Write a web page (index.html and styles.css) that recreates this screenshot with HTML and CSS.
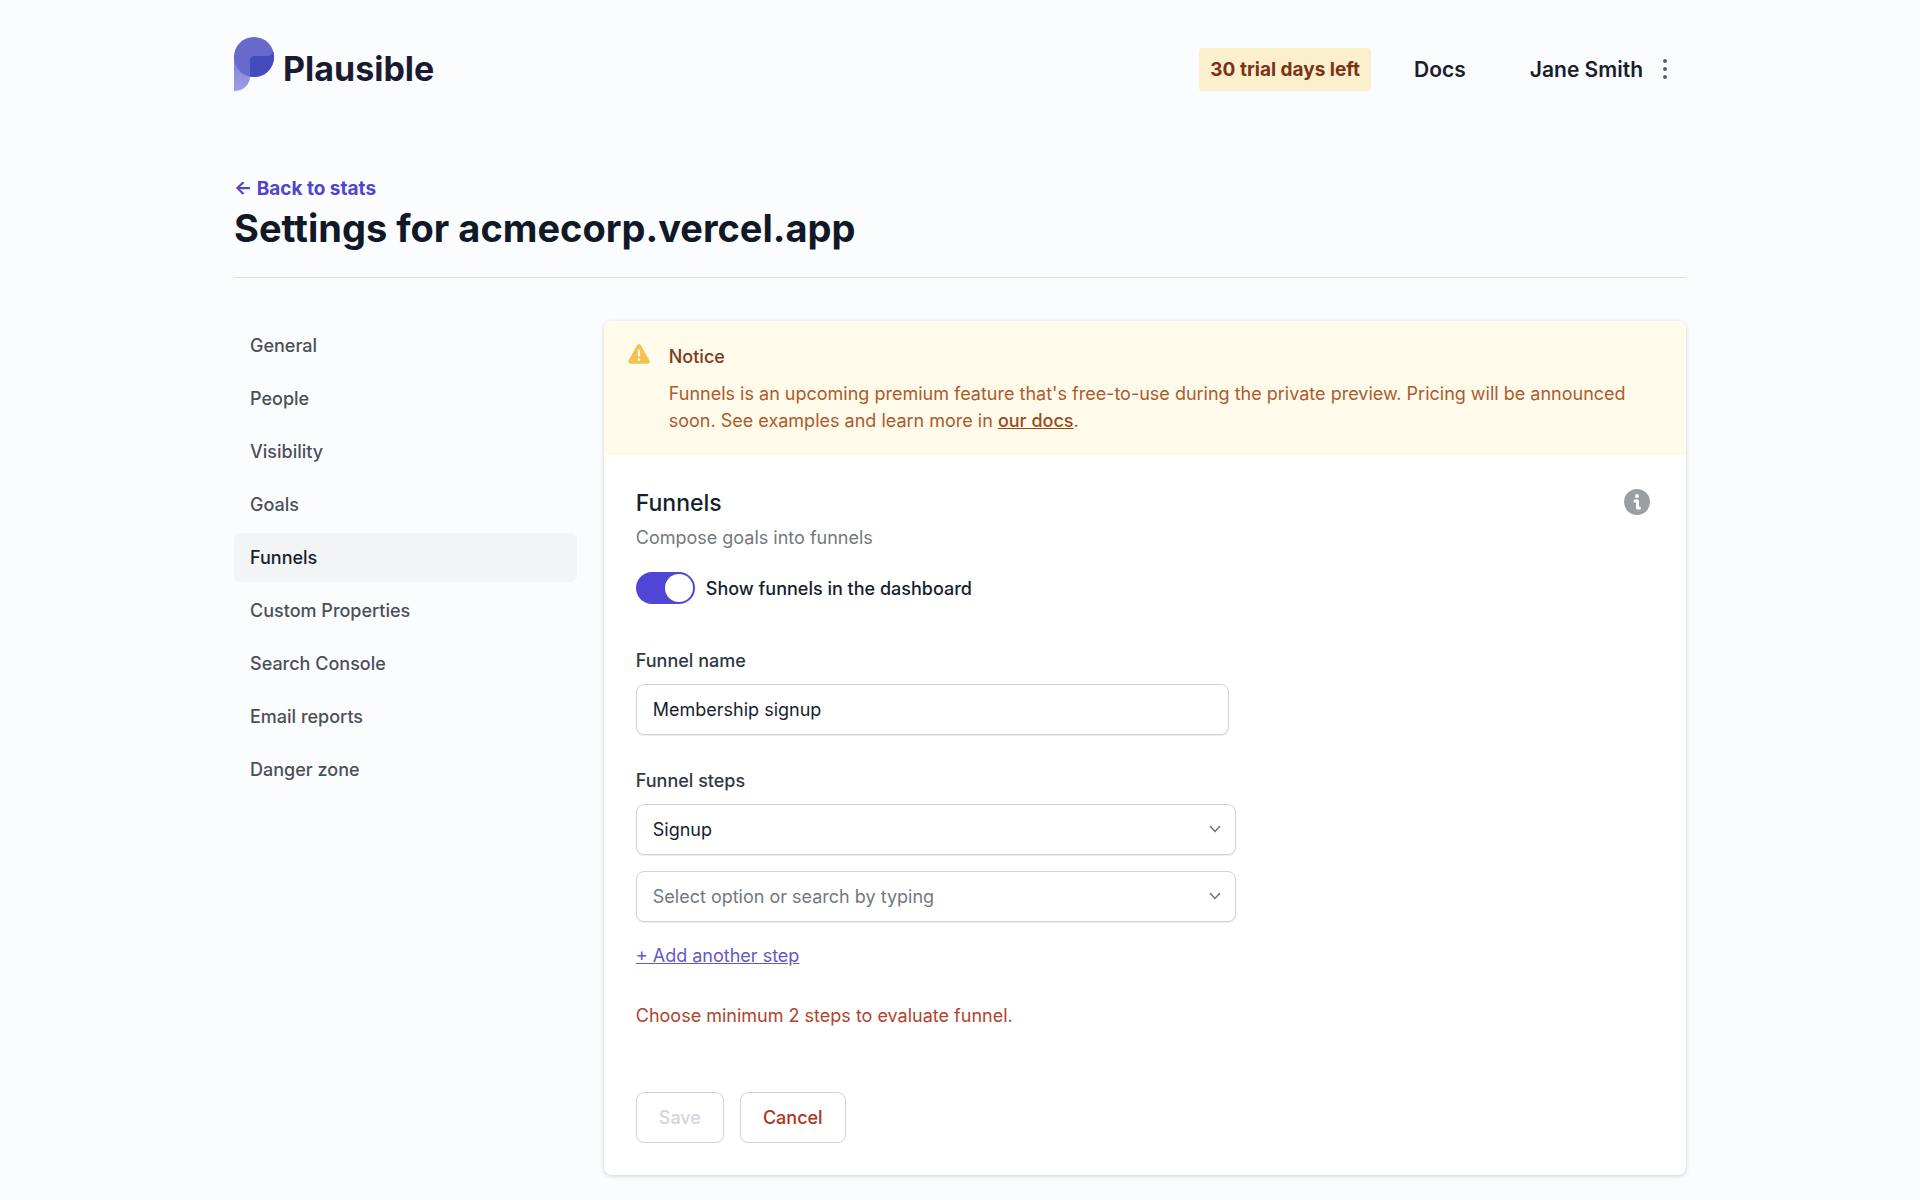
FILE: index.html
```html
<!DOCTYPE html>
<html lang="en">
<head>
    <meta charset="UTF-8">
    <meta name="viewport" content="width=device-width, initial-scale=1.0">
    <title>Plausible - Funnel settings</title>
    <link rel="stylesheet" href="styles.css">
</head>
<body>
    <header class="container header">
        <a href="#" class="logo">
            <svg class="logo-mark" viewBox="0 0 40 54" aria-hidden="true">
                <defs>
                    <linearGradient id="tail" x1="0" y1="0" x2="0" y2="1">
                        <stop offset="0" stop-color="#7f7fd4"/>
                        <stop offset="1" stop-color="#a09be4"/>
                    </linearGradient>
                    <clipPath id="disc"><circle cx="20" cy="20" r="20"/></clipPath>
                </defs>
                <path d="M0 18V54C9 54 16 48 16 39V18Z" fill="url(#tail)"/>
                <circle cx="20" cy="20" r="20" fill="#676acb"/>
                <path d="M16 54V24Q16 19 21 19H33Q39 19 39 12L44 12V54Z" fill="#444bbd" clip-path="url(#disc)"/>
            </svg>
            <span>Plausible</span>
        </a>
        <nav class="top-nav">
            <a href="#" class="trial">30 trial days left</a>
            <a href="#" class="top-link">Docs</a>
            <button type="button" class="user">
                Jane Smith
                <svg class="dots" viewBox="0 0 6 22" aria-hidden="true">
                    <circle cx="3" cy="3" r="2"/>
                    <circle cx="3" cy="11" r="2"/>
                    <circle cx="3" cy="19" r="2"/>
                </svg>
            </button>
        </nav>
    </header>

    <div class="container">
        <div class="page-title">
            <a href="#" class="back">← Back to stats</a>
            <h1>Settings for acmecorp.vercel.app</h1>
        </div>

        <div class="layout">
            <nav class="sidebar">
                <a href="#">General</a>
                <a href="#">People</a>
                <a href="#">Visibility</a>
                <a href="#">Goals</a>
                <a href="#" class="active">Funnels</a>
                <a href="#">Custom Properties</a>
                <a href="#">Search Console</a>
                <a href="#">Email reports</a>
                <a href="#">Danger zone</a>
            </nav>

            <main class="card">
                <div class="notice">
                    <svg class="notice-icon" viewBox="0 0 22 20" aria-hidden="true">
                        <path d="M8.9 1.4c.9-1.7 3.300-1.700 4.200 0l8.200 14.900c.9 1.600-.2 3.500-2.100 3.500H2.800c-1.900 0-3-1.900-2.100-3.500z" fill="#f2c250"/>
                        <path d="M11 6.500v5" stroke="#fffbeb" stroke-width="2.200" stroke-linecap="round"/>
                        <circle cx="11" cy="15.500" r="1.300" fill="#fffbeb"/>
                    </svg>
                    <div>
                        <h3>Notice</h3>
                        <p>Funnels is an upcoming premium feature that's free-to-use during the private preview. Pricing will be announced soon. See examples and learn more in <a href="#">our docs</a>.</p>
                    </div>
                </div>

                <form class="card-body">
                    <div class="card-head">
                        <div>
                            <h2>Funnels</h2>
                            <p class="muted">Compose goals into funnels</p>
                        </div>
                        <a href="#" class="info" aria-label="Funnels documentation">
                            <svg viewBox="0 0 26 26" aria-hidden="true">
                                <circle cx="13" cy="13" r="13" fill="#9b9fa4"/>
                                <circle cx="13" cy="7" r="2" fill="#fff"/>
                                <path d="M11 12h2.500v7H15.500" fill="none" stroke="#fff" stroke-width="3" stroke-linecap="round" stroke-linejoin="round"/>
                            </svg>
                        </a>
                    </div>

                    <label class="toggle">
                        <input type="checkbox" checked>
                        <span>Show funnels in the dashboard</span>
                    </label>

                    <div class="field">
                        <label for="funnel-name">Funnel name</label>
                        <input type="text" id="funnel-name" value="Membership signup">
                    </div>

                    <div class="field">
                        <label for="step-1">Funnel steps</label>
                        <div class="select">
                            <select id="step-1">
                                <option>Signup</option>
                            </select>
                            <svg viewBox="0 0 12 8" aria-hidden="true"><path d="M1 1l5 5.500 5-5.500"/></svg>
                        </div>
                        <div class="select">
                            <select id="step-2" class="empty" aria-label="Second step">
                                <option>Select option or search by typing</option>
                            </select>
                            <svg viewBox="0 0 12 8" aria-hidden="true"><path d="M1 1l5 5.500 5-5.500"/></svg>
                        </div>
                    </div>

                    <a href="#" class="add-step">+ Add another step</a>
                    <p class="error">Choose minimum 2 steps to evaluate funnel.</p>

                    <div class="actions">
                        <button type="submit" disabled>Save</button>
                        <button type="button" class="cancel">Cancel</button>
                    </div>
                </form>
            </main>
        </div>
    </div>
</body>
</html>
```

FILE: styles.css
```css
* { box-sizing: border-box; }
body {
    margin: 0;
    background: #fbfcfe;
    color: #161e2e;
    font-family: Inter, "Liberation Sans", sans-serif;
    font-size: 18px;
    line-height: 27px;
}
h1, h2, h3, p { margin: 0; }
button, input, select { font: inherit; color: inherit; }
.container { max-width: 1500px; padding: 0 24px; margin: 0 auto; }

/* header */
.header { display: flex; justify-content: space-between; align-items: center; padding-top: 37px; }
.logo { display: flex; align-items: center; gap: 9px; color: #1a1b33; font-size: 34px; font-weight: 700; line-height: 64px; text-decoration: none; }
.logo-mark { width: 40px; height: 54px; margin-bottom: 10px; }
.top-nav { display: flex; align-items: center; font-size: 21px; font-weight: 600; }
.trial { background: #fbf0cd; color: #7c3217; font-size: 19px; font-weight: 700; padding: 8px 11px; border-radius: 4px; text-decoration: none; }
.top-link { color: #1a202c; margin: 0 64px 0 43px; text-decoration: none; }
.user { display: flex; align-items: center; gap: 19px; border: 0; padding: 0; background: none; margin-right: 18px; }
.dots { width: 6px; height: 22px; fill: #5b6069; }

/* page title */
.page-title { padding: 74px 0 23px; border-bottom: 1px solid #dfe1e5; }
.back { display: block; color: #5145cd; font-size: 19px; font-weight: 700; text-decoration: none; }
h1 { font-size: 38px; line-height: 52px; font-weight: 700; color: #111827; }

/* layout */
.layout { display: grid; grid-template-columns: repeat(12, 1fr); gap: 27px; padding: 43px 0 25px; }
.sidebar { grid-column: span 3; display: flex; flex-direction: column; gap: 4px; }
.sidebar a { padding: 11px 16px; border-radius: 6px; color: #4b5058; font-weight: 500; text-decoration: none; }
.sidebar .active { background: #f3f4f6; color: #161e2e; }
.card { grid-column: span 9; background: #fff; border-radius: 8px; box-shadow: 0 1px 4px rgba(0, 0, 0, 0.18); overflow: hidden; }

.notice { display: flex; gap: 19px; padding: 22px 24px 21px; background: #fefbea; color: #ad5a2e; }
.notice-icon { flex: none; width: 22px; height: 20px; margin-top: 1px; }
.notice h3 { color: #7c3a1a; font-size: 18px; font-weight: 500; margin-bottom: 10px; }
.notice a { color: #9a4a1a; font-weight: 500; }

.card-body { padding: 32px; }
.card-head { display: flex; justify-content: space-between; align-items: flex-start; }
h2 { font-size: 23px; line-height: 32px; font-weight: 500; }
.muted { margin-top: 5px; color: #737880; }
.info { display: block; height: 26px; margin: 2px 4px 0 0; }
.info svg { width: 26px; height: 26px; }

.toggle { display: flex; align-items: center; gap: 11px; margin-top: 21px; font-weight: 500; }
.toggle input { appearance: none; width: 59px; height: 32px; margin: 0; padding: 2px; background: #4f46d8; border-radius: 16px; }
.toggle input::before { content: ""; display: block; width: 28px; height: 28px; margin-left: auto; background: #fff; border-radius: 50%; }

.field { display: flex; flex-direction: column; max-width: 600px; margin-top: 43px; }
.field label { margin-bottom: 10px; color: #2f3845; font-weight: 500; }
.field input, .select select { height: 51px; padding: 0 16px; background: #fff; border: 1px solid #d0d2d6; border-radius: 8px; box-shadow: 0 1px 1px rgba(0, 0, 0, 0.08); }
.field input { max-width: 593px; }
.field + .field { margin-top: 32px; }
.select { position: relative; }
.select + .select { margin-top: 16px; }
.select select { display: block; appearance: none; width: 100%; }
.select .empty { color: #737880; }
.select svg { position: absolute; right: 15px; top: 21px; width: 12px; height: 8px; fill: none; stroke: #6b7280; stroke-width: 1.5; pointer-events: none; }

.add-step { display: inline-block; margin-top: 20px; color: #6259cc; }
.error { margin-top: 33px; color: #b0432c; }
.actions { display: flex; gap: 16px; margin-top: 63px; }
.actions button { height: 51px; padding: 0 22px; background: #fff; border: 1px solid #d0d2d6; border-radius: 8px; font-weight: 500; }
.actions button:disabled { color: #d3d5d9; }
.actions .cancel { color: #ab3420; }
```
